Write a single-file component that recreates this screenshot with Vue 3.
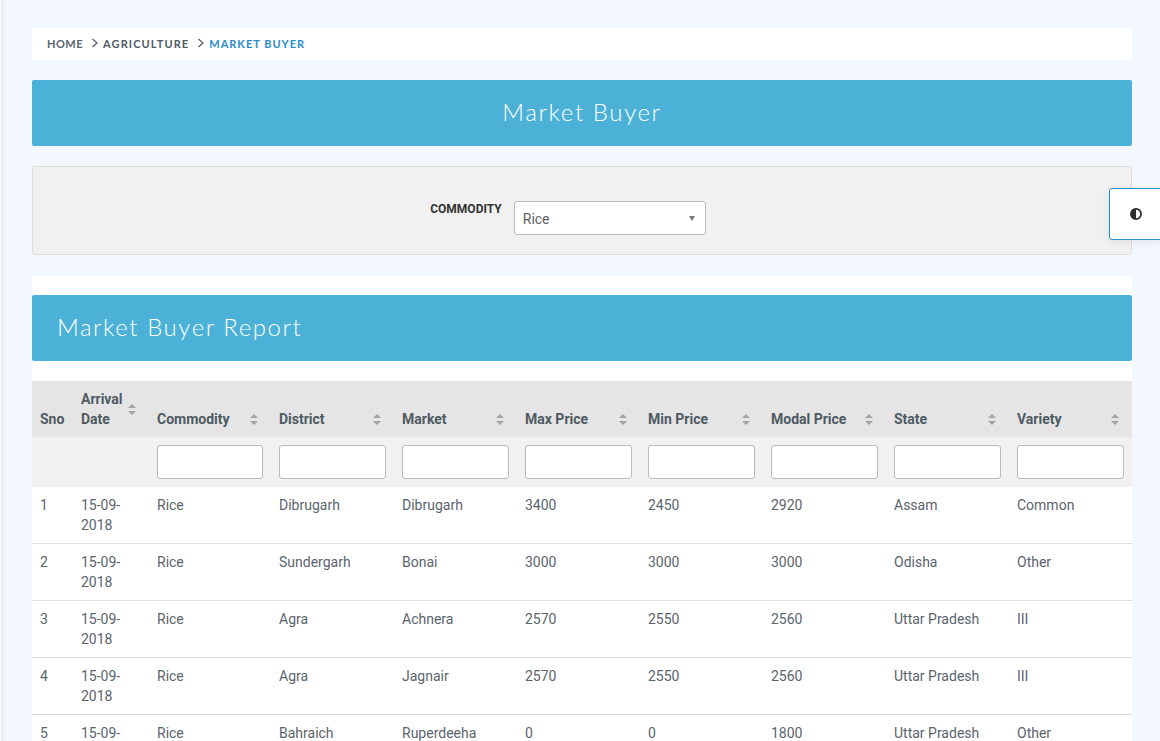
<script setup>
const columns = [
  { label: 'Sno', w: 41, sort: false },
  { label: 'Arrival Date', w: 76, sort: true, filter: false },
  { label: 'Commodity', w: 122, sort: true, filter: true },
  { label: 'District', w: 123, sort: true, filter: true },
  { label: 'Market', w: 123, sort: true, filter: true },
  { label: 'Max Price', w: 123, sort: true, filter: true },
  { label: 'Min Price', w: 123, sort: true, filter: true },
  { label: 'Modal Price', w: 123, sort: true, filter: true },
  { label: 'State', w: 123, sort: true, filter: true },
  { label: 'Variety', w: 123, sort: true, filter: true }
]
const rows = [
  ['1', '15-09-2018', 'Rice', 'Dibrugarh', 'Dibrugarh', '3400', '2450', '2920', 'Assam', 'Common'],
  ['2', '15-09-2018', 'Rice', 'Sundergarh', 'Bonai', '3000', '3000', '3000', 'Odisha', 'Other'],
  ['3', '15-09-2018', 'Rice', 'Agra', 'Achnera', '2570', '2550', '2560', 'Uttar Pradesh', 'III'],
  ['4', '15-09-2018', 'Rice', 'Agra', 'Jagnair', '2570', '2550', '2560', 'Uttar Pradesh', 'III'],
  ['5', '15-09-2018', 'Rice', 'Bahraich', 'Ruperdeeha', '0', '0', '1800', 'Uttar Pradesh', 'Other']
]
</script>

<template>
  <div class="page">
    <nav class="crumbs">
      <span class="home">HOME</span>
      <svg class="chev" width="8" height="10" viewBox="0 0 8 10"><path d="M1.5 1l4.5 4-4.5 4" /></svg>
      <span class="dark">AGRICULTURE</span>
      <svg class="chev" width="8" height="10" viewBox="0 0 8 10"><path d="M1.5 1l4.5 4-4.5 4" /></svg>
      <span class="active">MARKET BUYER</span>
    </nav>

    <h1 class="banner">Market Buyer</h1>

    <section class="filter">
      <label class="filter-label">COMMODITY</label>
      <div class="select">
        <span>Rice</span>
        <i class="caret"></i>
      </div>
    </section>

    <section class="card">
      <h2 class="report">Market Buyer Report</h2>
      <table class="grid">
        <colgroup>
          <col v-for="c in columns" :key="c.label" :style="{ width: c.w + 'px' }" />
        </colgroup>
        <thead>
          <tr class="head">
            <th v-for="c in columns" :key="c.label">
              <div class="th-in">
                <span>{{ c.label }}</span>
                <svg v-if="c.sort" class="sort" width="8" height="11" viewBox="0 0 8 11"><path d="M4 0l4 4H0zM4 11L0 7h8z" /></svg>
              </div>
            </th>
          </tr>
          <tr class="filters">
            <th v-for="c in columns" :key="c.label">
              <input v-if="c.filter" type="text" />
            </th>
          </tr>
        </thead>
        <tbody>
          <tr v-for="r in rows" :key="r[0]">
            <td v-for="(v, i) in r" :key="i">{{ v }}</td>
          </tr>
        </tbody>
      </table>
    </section>

    <button class="contrast" aria-label="Contrast">
      <svg width="12" height="12" viewBox="0 0 12 12">
        <circle cx="6" cy="6" r="5.1" fill="none" stroke="#2b2b2b" stroke-width="1.7" />
        <path d="M6 1a5 5 0 0 0 0 10z" fill="#2b2b2b" />
      </svg>
    </button>
  </div>
</template>

<style>
html, body { margin: 0; height: 100%; overflow: hidden; background: #f3f8fe; }
</style>

<style scoped>
.page {
  position: relative;
  box-sizing: border-box;
  height: 741px;
  overflow: hidden;
  padding: 28px 28px 0 32px;
  background: linear-gradient(to right, #fff 1px, #e8ecf3 1px, #f3f8fe 6px);
  font-family: Roboto, "Liberation Sans", sans-serif;
  color: #5a646d;
}
.crumbs {
  height: 32px;
  box-sizing: border-box;
  display: flex;
  align-items: center;
  gap: 6px;
  padding: 0 0 2px 15px;
  background: #fff;
  border-radius: 4px;
  font-family: Lato, "Open Sans", sans-serif;
  font-size: 11px;
  font-weight: 700;
  letter-spacing: 1.1px;
  color: #5a6570;
}
.home { letter-spacing: .5px; }
.dark { color: #4f5a63; }
.active { color: #2a8ccb; letter-spacing: 1px; }
.chev { fill: none; stroke: #4f5a63; stroke-width: 1.2; margin: 0 -2px 0 2px; }
.banner {
  margin: 20px 0;
  height: 66px;
  line-height: 64px;
  background: #4cb1d6;
  border-radius: 2px;
  color: #fff;
  text-align: center;
  font-family: Lato, sans-serif;
  font-size: 24px;
  font-weight: 300;
  letter-spacing: 1.6px;
}
.filter {
  box-sizing: border-box;
  height: 89px;
  display: flex;
  justify-content: center;
  align-items: flex-start;
  gap: 12px;
  padding-top: 34px;
  padding-right: 28px;
  background: #f1f1f1;
  border: 1px solid #dcdcdc;
  border-radius: 3px;
}
.filter-label {
  font-size: 12px;
  font-weight: 700;
  color: #333;
  line-height: 16px;
}
.select {
  box-sizing: border-box;
  width: 192px;
  height: 34px;
  display: flex;
  align-items: center;
  justify-content: space-between;
  padding: 2px 10px 0 8px;
  background: #fff;
  border: 1px solid #bbb;
  border-radius: 3px;
  font-size: 14px;
  color: #5f5f5f;
}
.caret {
  border-left: 3.5px solid transparent;
  border-right: 3.5px solid transparent;
  border-top: 5px solid #777;
  margin-bottom: 2px;
}
.card {
  margin-top: 21px;
  background: #fff;
  border-radius: 4px 4px 0 0;
  padding-top: 19px;
}
.report {
  margin: 0 0 20px;
  height: 66px;
  line-height: 64px;
  padding-left: 25px;
  background: #4cb1d6;
  border-radius: 2px;
  color: #fff;
  font-family: Lato, sans-serif;
  font-size: 24px;
  font-weight: 300;
  letter-spacing: 1.55px;
}
.grid {
  width: 100%;
  table-layout: fixed;
  border-collapse: separate;
  border-spacing: 0;
  font-size: 14px;
  color: #5a646d;
}
.head th {
  height: 56px;
  box-sizing: border-box;
  padding: 8px 13px 8px 8px;
  vertical-align: bottom;
  text-align: left;
  background: #e5e5e5;
  color: #4f5a63;
  font-weight: 700;
  line-height: 20px;
}
.th-in { display: flex; justify-content: space-between; align-items: center; gap: 4px; }
.sort { fill: #a3a3a3; flex: none; }
.filters th {
  height: 50px;
  box-sizing: border-box;
  padding: 8px;
  background: #f1f1f1;
}
.filters input {
  display: block;
  box-sizing: border-box;
  width: 100%;
  height: 34px;
  background: #fff;
  border: 1px solid #bbb;
  border-radius: 3px;
  padding: 0;
}
tbody td {
  box-sizing: border-box;
  height: 57px;
  padding: 8px;
  vertical-align: top;
  line-height: 20px;
  border-bottom: 1px solid #dcdcdc;
}
.contrast {
  position: absolute;
  top: 188px;
  right: -4px;
  width: 55px;
  height: 52px;
  display: flex;
  align-items: center;
  justify-content: center;
  padding: 0 2px 0 0;
  background: #fff;
  border: 1px solid #2a8ccb;
  border-radius: 3px;
  box-shadow: 0 2px 8px rgba(0, 0, 0, .08);
}
</style>
